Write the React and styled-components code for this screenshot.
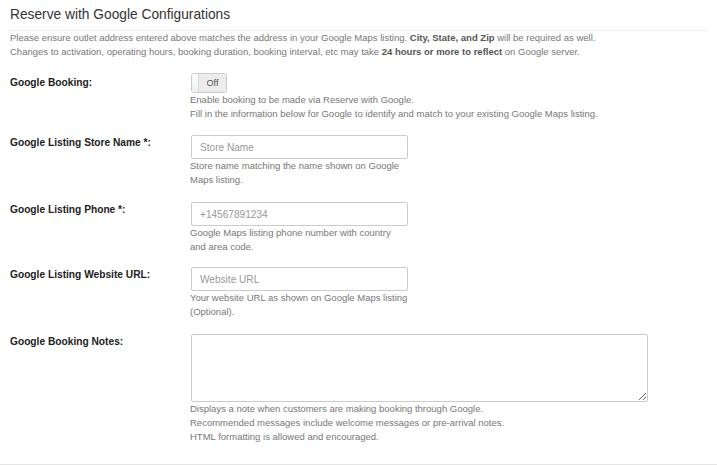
import React from "react";
import styled, { createGlobalStyle } from "styled-components";

const Global = createGlobalStyle`
  html, body { margin: 0; padding: 0; background: #fff; }
  body { font-family: "Liberation Sans", Arial, Helvetica, sans-serif; }
  * { box-sizing: border-box; }
`;

const Page = styled.div`
  width: 717px;
  height: 465px;
  padding: 0 9px 0 10px;
  border-bottom: 1px solid #e5e5e5;
  overflow: hidden;
`;

const Title = styled.h3`
  margin: 0;
  padding: 6px 0 6px;
  font-size: 13.75px;
  font-weight: normal;
  line-height: 18px;
  color: #333;
  border-bottom: 1px solid #eee;
`;

const Intro = styled.p`
  margin: 0;
  font-size: 9.5px;
  line-height: 14px;
  color: #777;
  b { color: #555; font-weight: bold; }
`;

const Form = styled.div`
  display: flex;
  flex-direction: column;
  gap: 15px;
  margin-top: 14px;
`;

const Row = styled.div`
  display: grid;
  grid-template-columns: 181px 1fr;
  margin-bottom: ${(p) => p.$mb || 0}px;
`;

const Label = styled.label`
  font-size: 10.2px;
  font-weight: bold;
  color: #222;
  line-height: 14px;
  padding-top: ${(p) => p.$top}px;
`;

const Control = styled.div`
  display: flex;
  flex-direction: column;
  align-items: flex-start;
`;

const Help = styled.div`
  margin-left: -1px;
  font-size: 9.5px;
  line-height: 14px;
  color: #777;
`;

const Toggle = styled.div`
  display: flex;
  width: 36px;
  height: 20px;
  border: 1px solid #ccc;
  border-radius: 3px;
  overflow: hidden;
  box-shadow: inset 0 1px 1px rgba(0,0,0,0.05);
`;

const Knob = styled.span`
  width: 7px;
  background: linear-gradient(#fdfdfd, #f0f0f0);
  border-right: 1px solid #d8d8d8;
`;

const OffLabel = styled.span`
  flex: 1;
  background: #ececec;
  color: #555;
  font-size: 9px;
  line-height: 18px;
  text-align: center;
`;

const Input = styled.input`
  width: 217px;
  height: 24px;
  padding: 0 8px;
  border: 1px solid #ccc;
  border-radius: 2px;
  font-family: inherit;
  font-size: 10.1px;
  color: #333;
  background: #fff;
  outline: none;
  &::placeholder { color: #999; }
`;

const TextArea = styled.textarea`
  width: 457px;
  height: 68px;
  border: 1px solid #ccc;
  border-radius: 2px;
  font-family: inherit;
  font-size: 10px;
  display: block;
  outline: none;
`;

export default function App() {
  return (
    <>
      <Global />
      <Page>
        <Title>Reserve with Google Configurations</Title>
        <Intro>
          Please ensure outlet address entered above matches the address in your Google Maps listing.{" "}
          <b>City, State, and Zip</b> will be required as well.
          <br />
          Changes to activation, operating hours, booking duration, booking interval, etc may take{" "}
          <b>24 hours or more to reflect</b> on Google server.
        </Intro>
        <Form>
          <Row $mb={-1}>
            <Label $top={3}>Google Booking:</Label>
            <Control>
              <Toggle>
                <Knob />
                <OffLabel>Off</OffLabel>
              </Toggle>
              <Help>
                Enable booking to be made via Reserve with Google.
                <br />
                Fill in the information below for Google to identify and match to your existing Google Maps listing.
              </Help>
            </Control>
          </Row>
          <Row>
            <Label $top={1}>Google Listing Store Name *:</Label>
            <Control>
              <Input placeholder="Store Name" />
              <Help>
                Store name matching the name shown on Google
                <br />
                Maps listing.
              </Help>
            </Control>
          </Row>
          <Row $mb={-2}>
            <Label $top={1}>Google Listing Phone *:</Label>
            <Control>
              <Input placeholder="+14567891234" />
              <Help>
                Google Maps listing phone number with country
                <br />
                and area code.
              </Help>
            </Control>
          </Row>
          <Row>
            <Label $top={1}>Google Listing Website URL:</Label>
            <Control>
              <Input placeholder="Website URL" />
              <Help>
                Your website URL as shown on Google Maps listing
                <br />
                (Optional).
              </Help>
            </Control>
          </Row>
          <Row>
            <Label $top={1}>Google Booking Notes:</Label>
            <Control>
              <TextArea />
              <Help>
                Displays a note when customers are making booking through Google.
                <br />
                Recommended messages include welcome messages or pre-arrival notes.
                <br />
                HTML formatting is allowed and encouraged.
              </Help>
            </Control>
          </Row>
        </Form>
      </Page>
    </>
  );
}
